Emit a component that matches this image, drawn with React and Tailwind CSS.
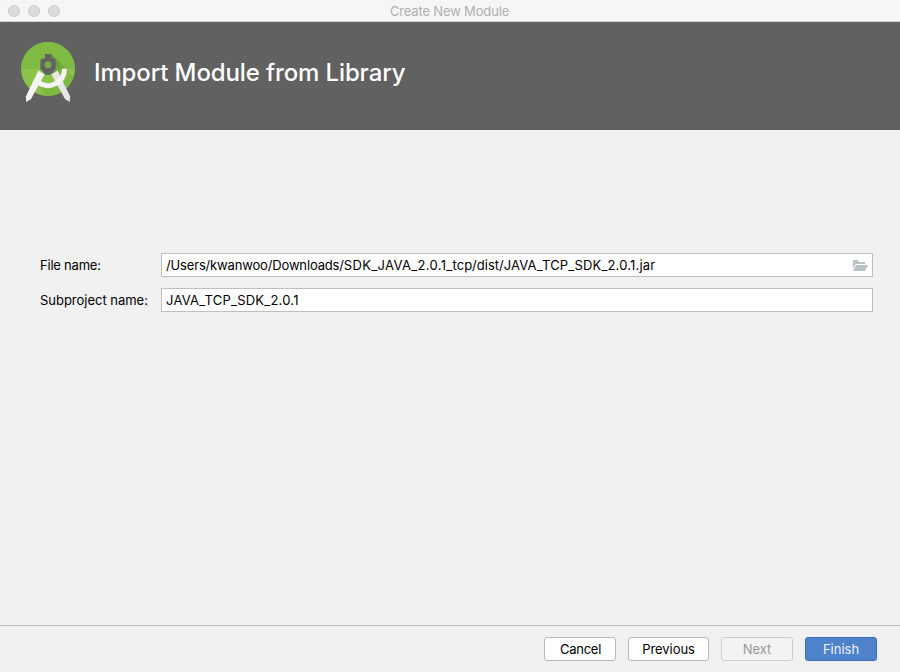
import React from "react";

function StudioLogo() {
  return (
    <svg className="block h-[72px] w-[76px] shrink-0" viewBox="0 0 76 72">
      <defs>
        <clipPath id="disc">
          <circle cx="38" cy="33" r="27" />
        </clipPath>
        <linearGradient id="shade" x1="0" y1="0" x2="1" y2="1">
          <stop offset="0" stopColor="#33691e" stopOpacity="0.5" />
          <stop offset="1" stopColor="#33691e" stopOpacity="0.05" />
        </linearGradient>
      </defs>
      <circle cx="38" cy="33" r="27" fill="#8bc34a" />
      <g clipPath="url(#disc)">
        <rect x="11" y="6" width="54" height="27" fill="#80b944" />
        <path d="M41 18 L60 37 H41 Z" fill="url(#shade)" />
        <path d="M29 48 Q38 54 47 49 L57 35 L66 42 L56 62 H36 Z" fill="#558b2f" opacity="0.2" />
      </g>
      <path d="M41.5 38.5 L47.6 34.5 L60.2 60.5 L59.7 66 L55 63 Z" fill="#e6e6e6" />
      <path d="M34.5 38.5 L28.4 34.5 L15.8 60.5 L16.3 66 L21 63 Z" fill="#f4f4f4" />
      <path d="M29 46.8 A16.5 16.5 0 0 0 54.5 32.7" fill="none" stroke="#f4f4f4" strokeWidth="5" />
      <path d="M34.8 18 H41.2 V22.8 H43.5 Q45.6 22.8 45.6 25 V33 L40.5 38.8 H35.5 L30.4 33 V25 Q30.4 22.8 32.5 22.8 H34.8 Z" fill="#616161" />
      <circle cx="38" cy="28.8" r="3.5" fill="#79a948" />
    </svg>
  );
}

function FolderIcon() {
  return (
    <svg className="mt-px block h-3 w-4" viewBox="0 0 16 12">
      <path d="M1 0 H5.5 L7 2 H13 V4 H3.8 L1 9 Z" fill="#b9c2c6" />
      <path d="M4.3 5 H16 L13 11 H1 Z" fill="#b9c2c6" />
    </svg>
  );
}

function Field({ label, labelClass, children, icon }) {
  return (
    <div className="flex h-6 items-center">
      <label className={`w-[121px] shrink-0 whitespace-nowrap text-[13px] leading-4 ${labelClass}`}>{label}</label>
      <div className="flex h-6 w-[712px] items-center justify-between border border-[#bfbfbf] bg-white px-1 text-[13px] leading-4">
        <span className="whitespace-nowrap">{children}</span>
        {icon}
      </div>
    </div>
  );
}

function Button({ className, children }) {
  return (
    <button className={`flex h-6 items-center justify-center rounded-[3px] border text-[13px] leading-4 ${className}`}>
      {children}
    </button>
  );
}

export default function App() {
  return (
    <div className="flex h-[672px] w-[900px] flex-col overflow-hidden bg-[#f1f1f1] font-['Inter','Liberation_Sans',sans-serif] text-black">
      <div className="grid h-[22px] shrink-0 grid-cols-3 items-center rounded-tl border-b border-[#cfcfcf] bg-[#f6f6f6]">
        <div className="flex gap-2 pl-2">
          <span className="size-3 rounded-full border border-[#cbcbcb] bg-[#dcdcdc]" />
          <span className="size-3 rounded-full border border-[#cbcbcb] bg-[#dcdcdc]" />
          <span className="size-3 rounded-full border border-[#cbcbcb] bg-[#dcdcdc]" />
        </div>
        <div className="pr-px pt-px text-center text-[13px] leading-4 tracking-[-0.16px] text-[#b0b0b0]">Create New Module</div>
      </div>
      <header className="flex h-[108px] shrink-0 items-start bg-[#616161] pl-[10px] pt-[14px]">
        <StudioLogo />
        <h1 className="ml-[8px] mt-[22px] whitespace-nowrap text-[24px] font-medium leading-[30px] tracking-[-0.12px] text-white">
          Import Module from Library
        </h1>
      </header>
      <main className="flex flex-1 flex-col gap-[11px] pl-10 pt-[123px]">
        <Field label="File name:" labelClass="tracking-[-0.22px]" icon={<FolderIcon />}>
          <span className="tracking-[-0.16px]">/Users/kwanwoo/Downloads/</span>
          <span className="tracking-[0.34px]">SDK_JAVA_2.0.1_</span>
          <span>tcp/dist/</span>
          <span className="tracking-[0.17px]">JAVA_TCP_SDK_2.0.1.jar</span>
        </Field>
        <Field label="Subproject name:" labelClass="tracking-[-0.02px]">
          <span className="tracking-[0.22px]">JAVA_TCP_SDK_2.0.1</span>
        </Field>
      </main>
      <footer className="flex h-[47px] shrink-0 justify-end gap-3 border-t border-[#bfbfbf] pr-[23px] pt-[11px]">
        <Button className="w-[72px] border-[#b8b8b8] bg-white pl-px tracking-[-0.25px]">Cancel</Button>
        <Button className="w-[81px] border-[#b8b8b8] bg-white tracking-[-0.05px]">Previous</Button>
        <Button className="w-[72px] border-[#cccccc] bg-[#f3f3f3] text-[#999999]">Next</Button>
        <Button className="w-[72px] border-[#3d6db8] bg-[#4e82cb] text-[#eef3fb]">Finish</Button>
      </footer>
    </div>
  );
}
